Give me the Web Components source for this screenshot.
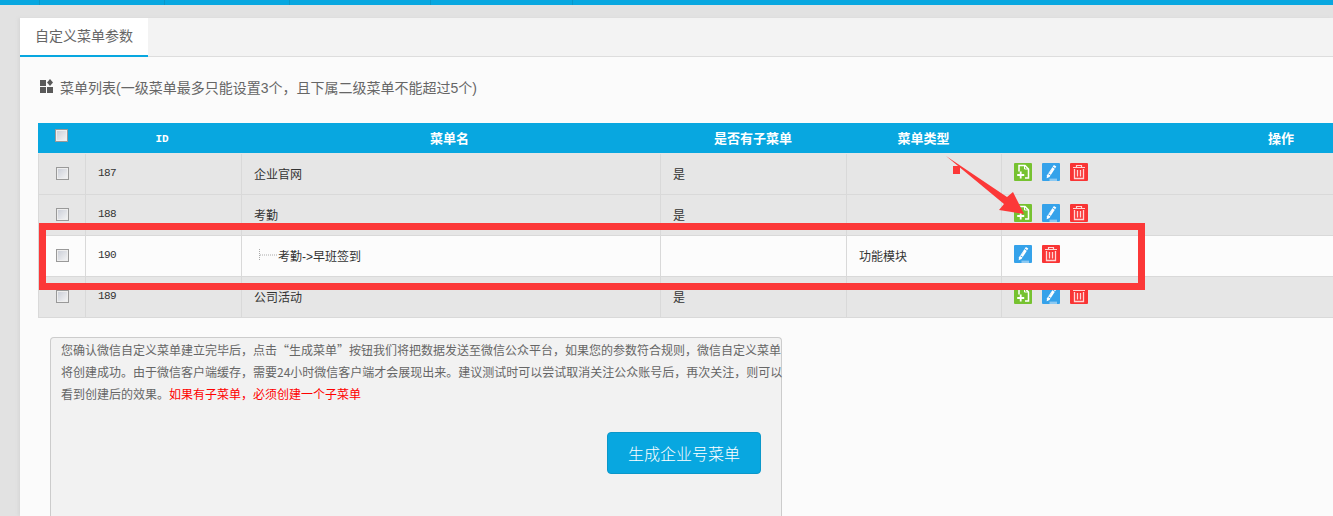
<!DOCTYPE html>
<html lang="zh">
<head>
<meta charset="utf-8">
<title>自定义菜单参数</title>
<style>
  html, body { margin: 0; height: 100%; overflow: hidden; background: #e2e2e2; }
  body { font-family: "Liberation Sans", "Noto Sans CJK SC", sans-serif; font-size: 12px; color: #333; }
</style>
</head>
<body>
<template id="menu-row-tpl">
  <style>
    :host { display: grid; grid-template-columns: 48px 156px 419px 186px 155px 560px; height: 41px; background: var(--row-bg, #e6e6e6); border-bottom: 1px solid #d9d9d9; box-sizing: border-box; box-shadow: inset 1px 0 #d9d9d9; color: #333; }
    .c { display: flex; align-items: center; padding: 0 0 2px 12px; border-right: 1px solid #d9d9d9; box-sizing: border-box; height: 100%; white-space: nowrap; font-size: 12px; }
    .c.chk { padding-left: 18px; }
    .id { font-family: "Liberation Mono", monospace; font-size: 11px; letter-spacing: -.6px; }
    .ops { gap: 10px; border: 0; padding-left: 12px; padding-bottom: 5px; }
  </style>
  <div class="c chk"><menu-check></menu-check></div>
  <div class="c id"><slot name="id"></slot></div>
  <div class="c"><slot name="name"></slot></div>
  <div class="c"><slot name="sub"></slot></div>
  <div class="c"><slot name="kind"></slot></div>
  <div class="c ops"><slot name="ops"></slot></div>
</template>

<script>
const ICONS = {
  add: `<svg viewBox="0 0 18 18" width="18" height="18"><rect width="18" height="18" rx="1" fill="#76c230"/><path d="M5 8.5V2.5h6l3.5 3.5v9h-3.5" fill="none" stroke="#fff" stroke-width="1.5"/><path d="M10.5 2.5v3.5h4" fill="none" stroke="#fff" stroke-width="1"/><path d="M3.2 12h7M6.7 8.6v6.8" stroke="#fff" stroke-width="1.8"/></svg>`,
  edit: `<svg viewBox="0 0 18 18" width="18" height="18"><rect width="18" height="18" rx="1" fill="#35a2ea"/><path d="M11.9 2l2.4 1.5-6.8 10.6-2.8 1.2.3-3z" fill="#fff"/><path d="M10.7 4.1l2.4 1.5M6.4 10.8l2.4 1.5" stroke="#35a2ea" stroke-width=".9"/><path d="M9.6 6.6l-3 4.7" stroke="#bfe1f8" stroke-width=".6"/><rect x="7.5" y="15.6" width="7.5" height="2.4" fill="#8cc9f2"/></svg>`,
  del: `<svg viewBox="0 0 18 18" width="18" height="18"><rect width="18" height="18" rx="1" fill="#f93434"/><path d="M3 4.5h12M6.5 4V2.5h5V4" fill="none" stroke="#ffd5d5" stroke-width="1.2"/><path d="M4.5 6v9.5h9V6M7.5 7v6.5M10.5 7v6.5" fill="none" stroke="#ffd5d5" stroke-width="1.3"/></svg>`
};

class MenuCheck extends HTMLElement {
  constructor () {
    super();
    this.attachShadow({ mode: 'open' }).innerHTML = `<style>
      :host { display: block; box-sizing: border-box; width: 13px; height: 13px; border: 1px solid #999; box-shadow: inset 0 0 0 1px #eee; background: linear-gradient(135deg, #c8ccd6, #f6f6f6); }
    </style>`;
  }
}
customElements.define('menu-check', MenuCheck);

class MenuIcon extends HTMLElement {
  connectedCallback () {
    // attributes are not there yet in the constructor while the parser runs
    if (this.shadowRoot) return;
    this.attachShadow({ mode: 'open' }).innerHTML = `<style>
      :host { display: block; width: 18px; height: 18px; }
      svg { display: block; }
    </style>${ICONS[this.getAttribute('type')] || ''}`;
  }
}
customElements.define('menu-icon', MenuIcon);

class MenuRow extends HTMLElement {
  constructor () {
    super();
    const tpl = document.getElementById('menu-row-tpl');
    this.attachShadow({ mode: 'open' }).append(tpl.content.cloneNode(true));
  }
}
customElements.define('menu-row', MenuRow);

class MenuTableHead extends HTMLElement {
  constructor () {
    super();
    this.attachShadow({ mode: 'open' }).innerHTML = `<style>
      :host { display: grid; grid-template-columns: 47px 154px 421px 186px 155px 560px; height: 31px; box-sizing: border-box; background: #08a7e0; border-bottom: 1px solid #e6e6e6; color: #fff; font-weight: 700; font-size: 13px; }
      div { display: flex; align-items: center; justify-content: center; white-space: nowrap; padding-bottom: 1px; }
      .chk { justify-content: flex-start; padding: 0 0 5px 17px; }
      .id { font-family: "Liberation Mono", monospace; font-size: 11px; padding: 1px 0 0; }
    </style>
    <div class="chk"><menu-check></menu-check></div>
    <div class="id">ID</div><div>菜单名</div><div>是否有子菜单</div><div>菜单类型</div><div>操作</div>`;
  }
}
customElements.define('menu-table-head', MenuTableHead);

class PanelTabs extends HTMLElement {
  constructor () {
    super();
    this.attachShadow({ mode: 'open' }).innerHTML = `<style>
      :host { display: block; height: 39px; box-sizing: border-box; background: #f3f3f3; border-bottom: 1px solid #ddd; }
      .tab { display: inline-block; box-sizing: border-box; width: 128px; height: 39px; line-height: 36px; text-align: center; background: #fff; border-bottom: 2px solid #08a7e0; font-size: 14px; color: #666; }
    </style><div class="tab"><slot></slot></div>`;
  }
}
customElements.define('panel-tabs', PanelTabs);

class NoticeLine extends HTMLElement {
  constructor () {
    super();
    this.attachShadow({ mode: 'open' }).innerHTML = `<style>
      :host { display: block; height: 22px; line-height: 22px; white-space: nowrap; }
      ::slotted(b) { color: #f00; font-weight: 400; }
    </style><slot></slot>`;
  }
}
customElements.define('notice-line', NoticeLine);

class NoticeBox extends HTMLElement {
  constructor () {
    super();
    this.attachShadow({ mode: 'open' }).innerHTML = `<style>
      :host { display: block; box-sizing: border-box; width: 732px; height: 200px; margin-left: 30px; padding: 1px 0 0 10px; background: #f2f2f2; border: 1px solid #ccc; border-bottom: 0; border-radius: 4px 4px 0 0; color: #666; font-family: "Noto Sans CJK SC", sans-serif; font-size: 12px; }
      .btn { display: flex; justify-content: flex-end; margin: 27px 20px 0 0; }
    </style>
    <slot></slot>
    <div class="btn"><slot name="action"></slot></div>`;
  }
}
customElements.define('notice-box', NoticeBox);

class ActionButton extends HTMLElement {
  constructor () {
    super();
    this.attachShadow({ mode: 'open' }).innerHTML = `<style>
      :host { display: block; box-sizing: border-box; width: 154px; height: 42px; line-height: 40px; text-align: center; background: #08a7e0; border: 1px solid #0b97c9; border-radius: 4px; color: #fff; font-size: 16px; font-weight: 300; }
    </style><slot></slot>`;
  }
}
customElements.define('action-button', ActionButton);

class AppPanel extends HTMLElement {
  constructor () {
    super();
    this.attachShadow({ mode: 'open' }).innerHTML = `<style>
      :host { display: block; margin-left: 20px; background: #fbfbfb; height: 498px; box-shadow: -2px 0 3px #d8d8d8; overflow: hidden; }
      .head { display: flex; align-items: center; gap: 7px; height: 66px; padding: 0 0 6px 20px; box-sizing: border-box; color: #666; font-size: 14px; }
      .head svg { display: block; margin-top: -3px; }
      .table { margin: 0 0 0 18px; width: 1523px; }
      .below { margin-top: 19px; margin-left: -18px; }
    </style>
    <slot name="tabs"></slot>
    <div class="head">
      <svg viewBox="0 0 13 14" width="13" height="14" fill="#595959"><rect x="0" y="1" width="6" height="6"/><rect x="0" y="8" width="6" height="6"/><rect x="7" y="8" width="6" height="6"/><path d="M10 0l3 3.5-3 3.5-3-3.5z"/></svg>
      <slot name="title"></slot>
    </div>
    <div class="table">
      <slot name="head"></slot>
      <slot></slot>
      <div class="below"><slot name="notice"></slot></div>
    </div>`;
  }
}
customElements.define('app-panel', AppPanel);

class TopBar extends HTMLElement {
  constructor () {
    super();
    this.attachShadow({ mode: 'open' }).innerHTML = `<style>
      :host { display: flex; height: 5px; background: #08a7e0; margin-bottom: 13px; }
      i { display: block; box-sizing: border-box; border-right: 1px solid #0a97ca; }
    </style>
    <i style="width:40px"></i><i style="width:125px"></i><i style="width:125px"></i><i style="width:141px"></i><i style="width:142px"></i>`;
  }
}
customElements.define('top-bar', TopBar);

class RedFrame extends HTMLElement {
  constructor () {
    super();
    this.attachShadow({ mode: 'open' }).innerHTML = `<style>
      :host { position: absolute; left: 39px; top: 223px; width: 1106px; height: 67px; box-sizing: border-box; border: 7px solid #fc3838; }
    </style>`;
  }
}
customElements.define('red-frame', RedFrame);

class RedArrow extends HTMLElement {
  constructor () {
    super();
    this.attachShadow({ mode: 'open' }).innerHTML = `<style>
      :host { position: absolute; left: 940px; top: 150px; width: 100px; height: 75px; }
      svg { display: block; }
    </style>
    <svg viewBox="0 0 100 75" width="100" height="75" fill="#fc3838">
      <path d="M6 6L67 47 73 42 84 64 59 60 64 54z"/>
      <rect x="13" y="16" width="7" height="8"/>
    </svg>`;
  }
}
customElements.define('red-arrow', RedArrow);
</script>

<top-bar></top-bar>
<app-panel>
  <panel-tabs slot="tabs">自定义菜单参数</panel-tabs>
  <span slot="title">菜单列表(一级菜单最多只能设置3个，且下属二级菜单不能超过5个)</span>
  <menu-table-head slot="head"></menu-table-head>
  <menu-row>
    <span slot="id">187</span><span slot="name">企业官网</span><span slot="sub">是</span>
    <menu-icon slot="ops" type="add"></menu-icon><menu-icon slot="ops" type="edit"></menu-icon><menu-icon slot="ops" type="del"></menu-icon>
  </menu-row>
  <menu-row>
    <span slot="id">188</span><span slot="name">考勤</span><span slot="sub">是</span>
    <menu-icon slot="ops" type="add"></menu-icon><menu-icon slot="ops" type="edit"></menu-icon><menu-icon slot="ops" type="del"></menu-icon>
  </menu-row>
  <menu-row style="--row-bg:#fcfcfc">
    <span slot="id">190</span>
    <span slot="name" style="display:flex;align-items:center;padding-left:5px"><svg width="19" height="12" style="display:block"><path d="M.5 0v12M1 6h18" stroke="#aaa" stroke-dasharray="1 1" fill="none"/></svg>考勤-&gt;早班签到</span>
    <span slot="kind">功能模块</span>
    <menu-icon slot="ops" type="edit"></menu-icon><menu-icon slot="ops" type="del"></menu-icon>
  </menu-row>
  <menu-row>
    <span slot="id">189</span><span slot="name">公司活动</span><span slot="sub">是</span>
    <menu-icon slot="ops" type="add"></menu-icon><menu-icon slot="ops" type="edit"></menu-icon><menu-icon slot="ops" type="del"></menu-icon>
  </menu-row>
  <notice-box slot="notice">
    <notice-line>您确认微信自定义菜单建立完毕后，点击“生成菜单”按钮我们将把数据发送至微信公众平台，如果您的参数符合规则，微信自定义菜单</notice-line>
    <notice-line>将创建成功。由于微信客户端缓存，需要24小时微信客户端才会展现出来。建议测试时可以尝试取消关注公众账号后，再次关注，则可以</notice-line>
    <notice-line>看到创建后的效果。<b>如果有子菜单，必须创建一个子菜单</b></notice-line>
    <action-button slot="action">生成企业号菜单</action-button>
  </notice-box>
</app-panel>
<red-frame></red-frame>
<red-arrow></red-arrow>
</body>
</html>
